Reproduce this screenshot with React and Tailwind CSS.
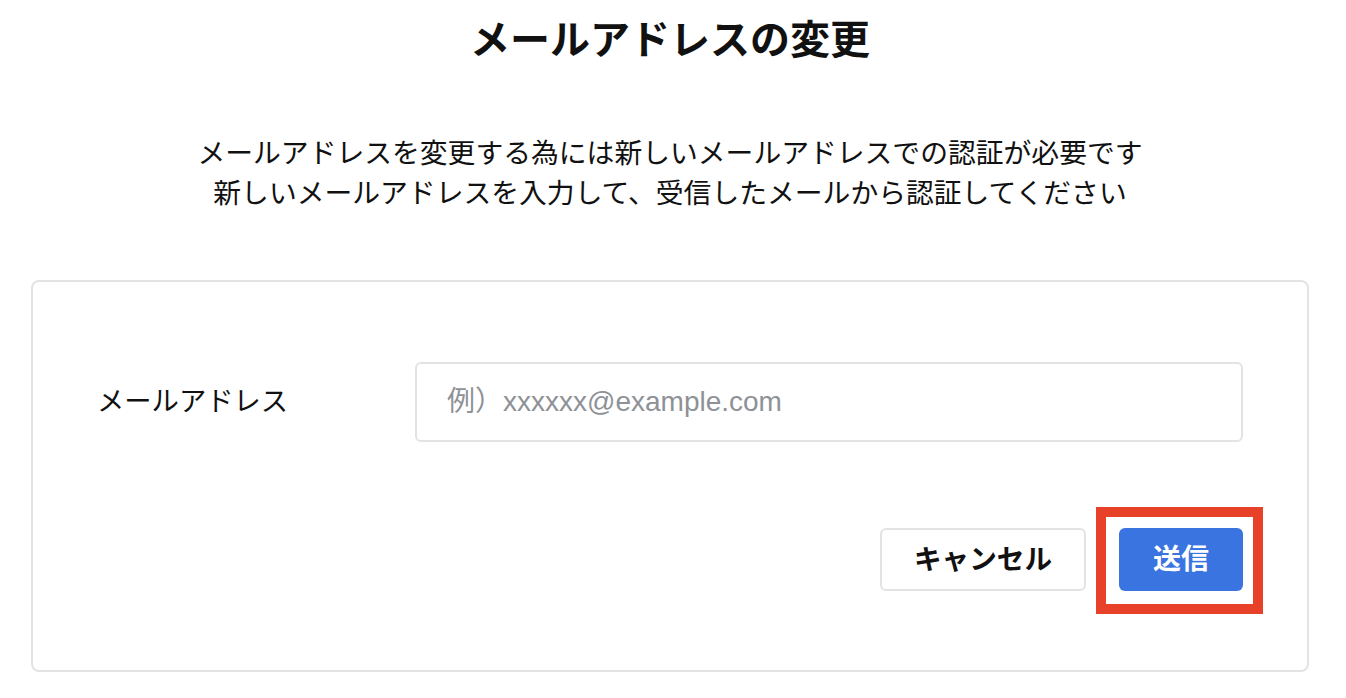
import React from "react";

const font = "font-['Liberation_Sans','Noto_Sans_CJK_JP',sans-serif]";

const App = () => {
  return (
    <div className={`w-[1340px] min-h-screen bg-white text-[#111] ${font}`}>
      <h1 className="pt-[10px] text-center text-[40px] leading-[60px] font-bold">
        メールアドレスの変更
      </h1>

      <div className="mt-[64px] text-center text-[27.8px] leading-[40px]">
        <p>メールアドレスを変更する為には新しいメールアドレスでの認証が必要です</p>
        <p>新しいメールアドレスを入力して、受信したメールから認証してください</p>
      </div>

      <div className="mt-[66px] mx-[31px] border-2 border-[#e2e4e4] rounded-[8px] px-[64px] pt-[80px] pb-[79px]">
        <div className="flex items-center">
          <label className="w-[318px] text-[27.3px] leading-[40px]">メールアドレス</label>
          <input
            type="email"
            placeholder="例）xxxxxx@example.com"
            className="flex-1 h-[80px] border-2 border-[#e2e4e4] rounded-[6px] px-[30px] text-[28px] outline-none placeholder:text-[#8e9196]"
          />
        </div>

        <div className="mt-[86px] flex justify-end gap-[33px]">
          <button className="w-[206px] h-[63px] border-2 border-[#e2e4e4] rounded-[6px] bg-white text-[27.6px] font-bold text-[#111]">
            キャンセル
          </button>
          <div className="relative">
            <button className="w-[124px] h-[63px] rounded-[6px] bg-[#3a74e0] text-[28px] font-bold text-white">
              送信
            </button>
            <div className="absolute -left-[23px] -top-[21px] -right-[20px] -bottom-[23px] border-[10px] border-[#e8412a] pointer-events-none" />
          </div>
        </div>
      </div>
    </div>
  );
};

export default App;
